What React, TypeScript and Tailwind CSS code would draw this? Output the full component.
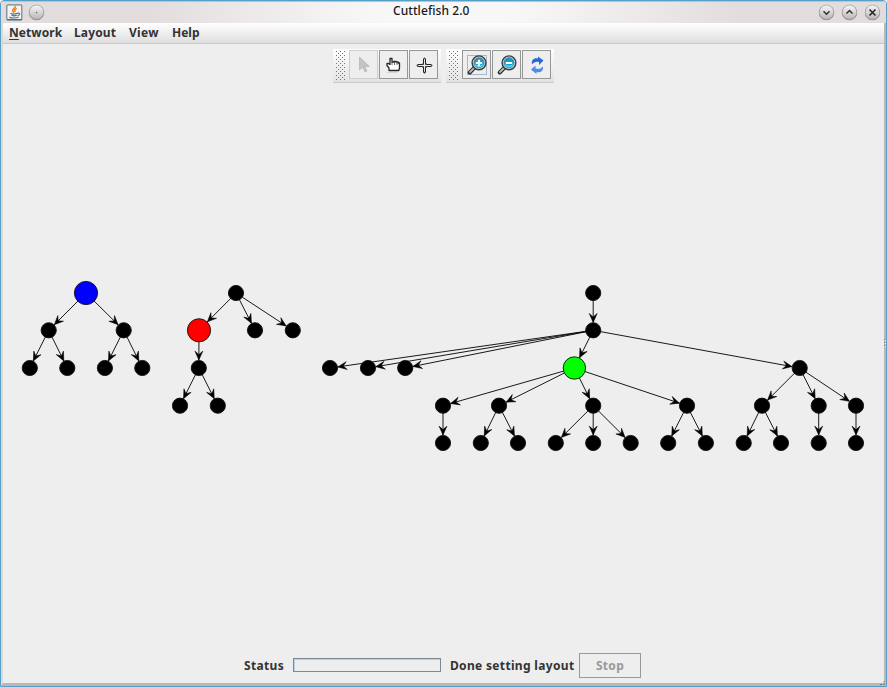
import React from "react";

type Point = [number, number];

const NODES: Record<string, Point> = {
  a: [86, 293], a1: [48.7, 330.3], a2: [123.7, 330.3],
  a3: [29.8, 368], a4: [67.3, 368], a5: [104.9, 368], a6: [142.3, 368],
  b: [236, 293], b1: [199, 330.3], b2: [255, 330.3], b3: [292.8, 330.3],
  b4: [198.8, 368], b5: [180, 405.7], b6: [217.8, 405.7],
  c: [593.2, 293], c1: [593.2, 330.3], c2: [330, 368], c3: [368, 368],
  c4: [405.2, 368], g: [574.4, 368], r: [799.7, 368],
  d1: [443, 405.7], d2: [499, 405.7], d3: [593.2, 405.7], d4: [687, 405.7],
  d5: [762, 405.7], d6: [818.7, 405.7], d7: [856, 405.7],
  e1: [443, 443], e2: [480.8, 443], e3: [518, 443], e4: [555.8, 443],
  e5: [593.2, 443], e6: [630.7, 443], e7: [668.2, 443], e8: [705.9, 443],
  e9: [743.7, 443], e10: [781, 443], e11: [818.7, 443], e12: [856, 443],
};

const COLORS: Record<string, string> = { a: "#0000ff", b1: "#ff0000", g: "#00ff00" };

const EDGES: [string, string][] = [
  ["a", "a1"], ["a", "a2"], ["a1", "a3"], ["a1", "a4"], ["a2", "a5"], ["a2", "a6"],
  ["b", "b1"], ["b", "b2"], ["b", "b3"], ["b1", "b4"], ["b4", "b5"], ["b4", "b6"],
  ["c", "c1"], ["c1", "c2"], ["c1", "c3"], ["c1", "c4"], ["c1", "g"], ["c1", "r"],
  ["g", "d1"], ["g", "d2"], ["g", "d3"], ["g", "d4"], ["r", "d5"], ["r", "d6"], ["r", "d7"],
  ["d1", "e1"], ["d2", "e2"], ["d2", "e3"], ["d3", "e4"], ["d3", "e5"], ["d3", "e6"],
  ["d4", "e7"], ["d4", "e8"], ["d5", "e9"], ["d5", "e10"], ["d6", "e11"], ["d7", "e12"],
];

function radius(id: string) {
  return id === "g" ? 11.2 : COLORS[id] ? 11.6 : 7.6;
}

function Edge({ from, to }: { from: string; to: string }) {
  const [x1, y1] = NODES[from];
  const [x2, y2] = NODES[to];
  const length = Math.hypot(x2 - x1, y2 - y1);
  const t = (length - radius(to) - 0.3) / length;
  const tx = x1 + (x2 - x1) * t;
  const ty = y1 + (y2 - y1) * t;
  const angle = (Math.atan2(y2 - y1, x2 - x1) * 180) / Math.PI;
  return (
    <g>
      <line x1={x1} y1={y1} x2={tx} y2={ty} stroke="#000" strokeWidth="0.9" />
      <path d="M0 0L-9 -4L-5.500 0L-9 4Z" stroke="#000" strokeWidth=".5" transform={`translate(${tx} ${ty}) rotate(${angle})`} />
    </g>
  );
}

function Graph() {
  return (
    <svg className="block h-[566px] w-[881px] shrink-0" viewBox="3 83 881 566">
      {EDGES.map(([from, to]) => <Edge key={from + to} from={from} to={to} />)}
      {Object.entries(NODES).map(([id, [x, y]]) => (
        <circle key={id} cx={x} cy={y} r={radius(id)} fill={COLORS[id] ?? "#000"} stroke="#111" strokeWidth="0.9" />
      ))}
    </svg>
  );
}

function RoundButton({ children }: { children: React.ReactNode }) {
  return (
    <svg className="size-[17px] shrink-0" viewBox="0 0 17 17" fill="none">
      <defs>
        <linearGradient id="knob" x1="0" y1="0" x2="0" y2="1">
          <stop offset="0" stopColor="#f8f7f7" /><stop offset="1" stopColor="#b8b5b5" />
        </linearGradient>
      </defs>
      <circle cx="8.5" cy="8.7" r="7.6" fill="#858383" />
      <circle cx="8.5" cy="8.2" r="7.2" fill="url(#knob)" stroke="#a5a3a3" strokeWidth=".7" />
      {children}
    </svg>
  );
}

function JavaIcon() {
  return (
    <svg className="size-[17px]" viewBox="0 0 17 17" fill="none">
      <rect x=".8" y=".8" width="15" height="15" rx="1" fill="#f5f4f2" stroke="#6f8492" strokeWidth="1.2" />
      <path d="M1 15.7h15" stroke="#42637b" strokeWidth="1" />
      <path d="M9.2 2c1 2-3.8 3.300-2.200 5.300l.9 1.400M10.800 4.400C8.300 5.400 8.500 6.200 9.300 7.800" stroke="#e87c18" strokeWidth="1.500" />
      <path d="M4.500 9.400c1.500.7 5 .7 7 0M5.500 11.300c1.500.6 3.700.6 5.200 0M11.500 9.200c3-.8 2.600 2 0 2.400M3.700 12.800c-.6 1.600 7.600 1.600 9 .1" stroke="#4c7892" strokeWidth="1.200" />
    </svg>
  );
}

function Grip() {
  return (
    <svg className="mr-[3px] h-[31px] w-[11px]" viewBox="0 0 11 31">
      <defs>
        <pattern id="grip" width="4" height="4" patternUnits="userSpaceOnUse">
          <rect width="1" height="1" x="1" y="1" fill="#6b7681" />
          <rect width="1" height="1" x="3" y="3" fill="#6b7681" />
        </pattern>
      </defs>
      <rect width="11" height="31" fill="url(#grip)" />
    </svg>
  );
}

function ToolButton({ disabled = false, children }: { disabled?: boolean; children: React.ReactNode }) {
  return (
    <button className={`mr-px flex h-[29px] w-[29px] items-center justify-center border bg-[#eee] ${disabled ? "border-[#cdcdcd]" : "border-[#969696]"}`}>
      <svg className="h-[27px] w-[27px] shrink-0" viewBox="1 1 27 27" fill="none">{children}</svg>
    </button>
  );
}

function Magnifier({ plus = false }: { plus?: boolean }) {
  return (
    <>
      <path d="M7.700 22.500L13 17.200" stroke="#252a2d" strokeWidth="4" strokeLinecap="round" />
      <path d="M8 22L13 17" stroke="#b9bdbe" strokeWidth="1.800" strokeLinecap="round" />
      <circle cx="17" cy="12.800" r="6.900" fill="#cfd5d7" stroke="#383e41" strokeWidth="1.400" />
      <circle cx="17" cy="12.800" r="5" fill="#139dcc" stroke="#58788a" strokeWidth=".8" />
      <path d="M12.500 13.800c3 2 6 2 9 0c-.7 5-8.300 5-9 0" fill="#45d8f0" />
      <path d="M13.800 13h6.400" stroke="#fff" strokeWidth="2.200" />
      {plus && <path d="M17 9.700v6.600" stroke="#fff" strokeWidth="2.200" />}
    </>
  );
}

function ToolBar({ children }: { children: React.ReactNode }) {
  return (
    <div className="flex h-[34px] w-[108px] items-start border-b border-[#c9c9c9] bg-gradient-to-b from-white to-[#e3e3e3] pl-[2px] pt-[1px]">
      <Grip />
      {children}
    </div>
  );
}

export default function App() {
  return (
    <main className="relative flex h-[687px] w-[887px] flex-col overflow-hidden rounded-t-[4px] border border-[#559fc9] bg-[#eee] font-['Noto_Sans','Open_Sans',sans-serif] text-[12px] text-[#333]">
      <header className="flex h-[22px] shrink-0 items-center border-t border-[#a3cce1] bg-[radial-gradient(ellipse_300px_60px_at_center,#f8f7f7_25%,#e2dddc_100%)] px-[5px]">
        <div className="flex w-[340px] items-center gap-[5px]">
          <JavaIcon />
          <RoundButton><circle cx="8.500" cy="8.500" r=".8" fill="#666" /></RoundButton>
        </div>
        <div className="flex h-[21px] flex-1 pl-[47px]">
          <h1 className="whitespace-nowrap text-[12px] font-medium leading-[18px] tracking-[0.07px] text-[#181818]">Cuttlefish 2.0</h1>
        </div>
        <div className="flex w-[324px] items-center justify-end gap-[6px]">
          <RoundButton><path d="M5.500 7.200l3 3 3-3" stroke="#333" strokeWidth="1.500" /></RoundButton>
          <RoundButton><path d="M5.500 9.500l3-3 3 3" stroke="#333" strokeWidth="1.500" /></RoundButton>
          <RoundButton><path d="M5.500 5.500l6 6M11.500 5.500l-6 6" stroke="#222" strokeWidth="1.500" /></RoundButton>
        </div>
      </header>
      <div className="flex min-h-0 flex-1 flex-col border-b-[3px] border-l-2 border-r-2 border-b-[#bdb7b3] border-l-[#ddd9d7] border-r-[#bcb8b5]">
        <nav className="flex h-[21px] shrink-0 border-b border-[#c8c8c8] bg-gradient-to-b from-white to-[#dedede] pl-[6px] font-bold leading-[19px]">
          <span className="w-[65px] tracking-[0.06px]"><span className="underline underline-offset-2">N</span>etwork</span>
          <span className="w-[55px] tracking-[0.15px]">Layout</span>
          <span className="w-[43px] tracking-[0.3px]">View</span>
          <span>Help</span>
        </nav>
        <div className="flex h-[39px] shrink-0 gap-[5px] pl-[330px] pt-[5px]">
          <ToolBar>
            <ToolButton disabled><path d="M10.500 7v13l3.200-3 2.300 5 2-.9-2.300-4.700h4.600Z" fill="#c4c4c4" stroke="#b3b3b3" strokeWidth=".7" /></ToolButton>
            <ToolButton>
              <path d="M8 22.500h10" stroke="#d4d4d4" />
              <path d="M10 20.500v-2.500l-2-2.500v-2h1.500l1.500 1V8.500h2V12h2v-.5h2v.5h2v1h1.500v5l-.7 2.500Z" fill="#fff" stroke="#252525" strokeWidth="1.300" strokeLinejoin="round" />
              <path d="M13 12v3M15.500 12v3M18 13v2" stroke="#444" strokeWidth=".8" />
            </ToolButton>
            <ToolButton>
              <path d="M14.500 13.700V9.500q1-3 2 0v4.200M14.500 17.300v4.200q1 3 2 0v-4.200M13.700 14.500H9.500q-3 1 0 2h4.200M17.300 14.500h4.200q3 1 0 2h-4.200M13.500 13.500l1.200 1.200M17.500 13.500l-1.200 1.200M13.500 17.500l1.200-1.200M17.500 17.500l-1.200-1.200" stroke="#222" strokeWidth="1.050" />
            </ToolButton>
          </ToolBar>
          <ToolBar>
            <ToolButton><rect x="5.500" y="5.500" width="19" height="19" stroke="#a3b8cc" /><Magnifier plus /></ToolButton>
            <ToolButton><Magnifier /></ToolButton>
            <ToolButton>
              <path d="M10 14.500c-1-5 2.500-7 6-6V6.500l5.500 4-4.500 4.500v-3c-3-.7-5 0-7 2.500Z" fill="#2869d9" />
              <path d="M21 16.500c.5 5-3 6.500-6.500 5.500v2L9 19.500l4.500-4v3c3 1 5 .5 7.500-2Z" fill="#4c8ceb" />
            </ToolButton>
          </ToolBar>
        </div>
        <div className="flex h-[566px] shrink-0 overflow-hidden">
          <Graph />
        </div>
        <footer className="flex h-[33px] shrink-0 items-center pl-[241px] font-bold">
          <span className="w-[49px] tracking-[0.35px]">Status</span>
          <div className="mb-[2px] h-[14px] w-[148px] border border-[#7a8a99] bg-[#eee] shadow-[inset_1px_1px_0_#b8cfe5]" />
          <span className="ml-[9px] w-[129px] whitespace-nowrap tracking-[0.33px]">Done setting layout</span>
          <button className="h-[25px] w-[62px] border border-[#999] tracking-[0.3px] text-[#999]">Stop</button>
        </footer>
      </div>
      <svg className="absolute right-0 top-[338px] h-[10px] w-[2px]" viewBox="0 0 2 10">
        <path d="M0 .5h1M0 3.500h1M0 6.500h1" stroke="#777" />
        <path d="M1 1.500h1M1 4.500h1M1 7.500h1" stroke="#eee" />
      </svg>
      <svg className="absolute bottom-0 right-0 h-[6px] w-[7px]" viewBox="0 0 7 6">
        <path d="M1 4.500h2M5 1v1M5 3v2" stroke="#77716e" />
      </svg>
    </main>
  );
}
